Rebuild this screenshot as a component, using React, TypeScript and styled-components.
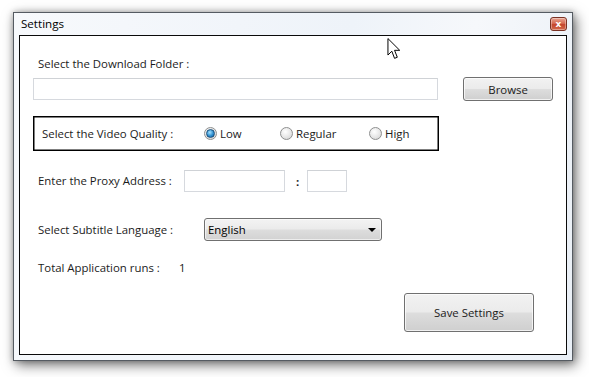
import React from "react";
import styled, { createGlobalStyle, css } from "styled-components";

const Global = createGlobalStyle`
  html, body { margin: 0; padding: 0; background: #ffffff; }
  body { font-family: "Open Sans", "Noto Sans", "Liberation Sans", sans-serif; font-size: 11.4px; color: #1b1b1b; }
  * { box-sizing: border-box; }
`;

const Page = styled.div`
  width: 589px;
  height: 377px;
  padding: 12px 0 0 13px;
  position: relative;
  overflow: hidden;
`;

const Window = styled.div`
  width: 560px;
  height: 349px;
  border: 1px solid #555b62;
  background: linear-gradient(100deg, #f7f9fc 0%, #eef3f9 55%, #f6f8fb 75%, #e9eff6 100%);
  box-shadow: 3px 4px 12px rgba(0, 0, 0, 0.55), 0 0 6px rgba(0, 0, 0, 0.25);
  padding: 0 5px 5px 5px;
  display: flex;
  flex-direction: column;
`;

const TitleBar = styled.div`
  height: 22px;
  display: flex;
  align-items: center;
  justify-content: space-between;
  padding-left: 2px;
`;

const Title = styled.span`
  font-size: 11.6px;
  color: #000;
  line-height: 16px;
`;

const CloseButton = styled.div`
  width: 17px;
  height: 14px;
  border: 1px solid #7a3224;
  border-radius: 3px;
  background: linear-gradient(#e9a592 0%, #d66a52 45%, #c4452c 55%, #d46a4d 100%);
  box-shadow: inset 0 0 0 1px rgba(255, 255, 255, 0.35);
  display: flex;
  align-items: center;
  justify-content: center;
  color: #fff;
  font-family: "DejaVu Sans", sans-serif;
  font-weight: bold;
  font-size: 9px;
  line-height: 1;
`;

const Client = styled.div`
  flex: 1;
  border: 1px solid #0a0a0a;
  background: #fff;
  display: flex;
  flex-direction: column;
  padding: 20px 13px 0 13px;
`;

const Label = styled.span<{ $w?: number }>`
  display: inline-block;
  line-height: 16px;
  color: #1b1b1b;
  white-space: nowrap;
  ${(p) => p.$w && css`width: ${p.$w}px;`}
`;

const Row = styled.div<{ $mt: number; $indent?: number }>`
  display: flex;
  align-items: center;
  margin-top: ${(p) => p.$mt}px;
  padding-left: ${(p) => p.$indent ?? 0}px;
`;

const TextField = styled.div<{ $w: number }>`
  width: ${(p) => p.$w}px;
  height: 22px;
  border: 1px solid #d6d9de;
  border-top-color: #cfd2d6;
  background: #fff;
`;

const Button = styled.div<{ $w: number; $h: number }>`
  width: ${(p) => p.$w}px;
  height: ${(p) => p.$h}px;
  border: 1px solid #707070;
  border-radius: 3px;
  background: linear-gradient(#f2f2f2 0%, #ebebeb 48%, #dddddd 52%, #cfcfcf 100%);
  box-shadow: inset 0 0 0 1px rgba(255, 255, 255, 0.7);
  display: flex;
  align-items: center;
  justify-content: center;
  color: #1b1b1b;
`;

const QualityBox = styled.div`
  margin-top: 15px;
  width: 406px;
  height: 35px;
  border: 1px solid #000;
  box-shadow: inset 0 0 0 0.5px #000;
  display: flex;
  align-items: center;
  padding-left: 8px;
`;

const RadioOption = styled.div<{ $w: number }>`
  display: flex;
  align-items: center;
  gap: 3px;
  width: ${(p) => p.$w}px;
`;

const RadioCircle = styled.span<{ $on?: boolean }>`
  width: 13px;
  height: 13px;
  border-radius: 50%;
  border: 1px solid #8e8f8f;
  background: radial-gradient(circle at 40% 35%, #ffffff 0%, #e6e6e6 55%, #cfcfcf 100%);
  display: flex;
  align-items: center;
  justify-content: center;
  &::after {
    content: "";
    display: ${(p) => (p.$on ? "block" : "none")};
    width: 7px;
    height: 7px;
    border-radius: 50%;
    border: 1px solid #1b4f7a;
    background: radial-gradient(circle at 40% 35%, #a6e2ff 0%, #2e8fd0 55%, #145a96 100%);
  }
`;

const Colon = styled.span`
  font-weight: bold;
  margin: 0 8px 0 11px;
`;

const Select = styled.div`
  width: 178px;
  height: 23px;
  border: 1px solid #707070;
  border-radius: 3px;
  background: linear-gradient(#f3f3f3 0%, #ebebeb 48%, #dddddd 52%, #d2d2d2 100%);
  box-shadow: inset 0 0 0 1px rgba(255, 255, 255, 0.6);
  display: flex;
  align-items: center;
  justify-content: space-between;
  padding: 0 5px 0 3px;
  color: #000;
`;

const Arrow = styled.span`
  width: 0;
  height: 0;
  border-left: 4px solid transparent;
  border-right: 4px solid transparent;
  border-top: 4px solid #000;
  margin-top: 1px;
`;

const Cursor = styled.svg`
  position: absolute;
  left: 385px;
  top: 38px;
`;

export default function App() {
  return (
    <>
      <Global />
      <Page>
        <Window>
          <TitleBar>
            <Title>Settings</Title>
            <CloseButton>x</CloseButton>
          </TitleBar>
          <Client>
            <Row $mt={0} $indent={5}>
              <Label>Select the Download Folder :</Label>
            </Row>
            <Row $mt={5}>
              <TextField $w={406} />
              <Button $w={90} $h={24} style={{ marginLeft: 25 }}>Browse</Button>
            </Row>
            <QualityBox>
              <Label $w={162}>Select the Video Quality :</Label>
              <RadioOption $w={76}>
                <RadioCircle $on />
                <Label>Low</Label>
              </RadioOption>
              <RadioOption $w={89}>
                <RadioCircle />
                <Label>Regular</Label>
              </RadioOption>
              <RadioOption $w={50}>
                <RadioCircle />
                <Label>High</Label>
              </RadioOption>
            </QualityBox>
            <Row $mt={19} $indent={5}>
              <Label $w={146}>Enter the Proxy Address :</Label>
              <TextField $w={101} />
              <Colon>:</Colon>
              <TextField $w={40} />
            </Row>
            <Row $mt={26} $indent={5}>
              <Label $w={166}>Select Subtitle Language :</Label>
              <Select>
                <span>English</span>
                <Arrow />
              </Select>
            </Row>
            <Row $mt={19} $indent={5}>
              <Label $w={141}>Total Application runs :</Label>
              <Label>1</Label>
            </Row>
            <Row $mt={17} style={{ justifyContent: "flex-end", paddingRight: 19 }}>
              <Button $w={130} $h={39}>Save Settings</Button>
            </Row>
          </Client>
        </Window>
        <Cursor width="18" height="22" viewBox="0 0 12 20">
          <path d="M0.5 0.5 L0.5 15.5 L4 12 L6.5 18.5 L9 17.5 L6.5 11.2 L11.2 11.2 Z" fill="#fff" stroke="#000" strokeWidth="0.9" strokeLinejoin="round" />
        </Cursor>
      </Page>
    </>
  );
}
